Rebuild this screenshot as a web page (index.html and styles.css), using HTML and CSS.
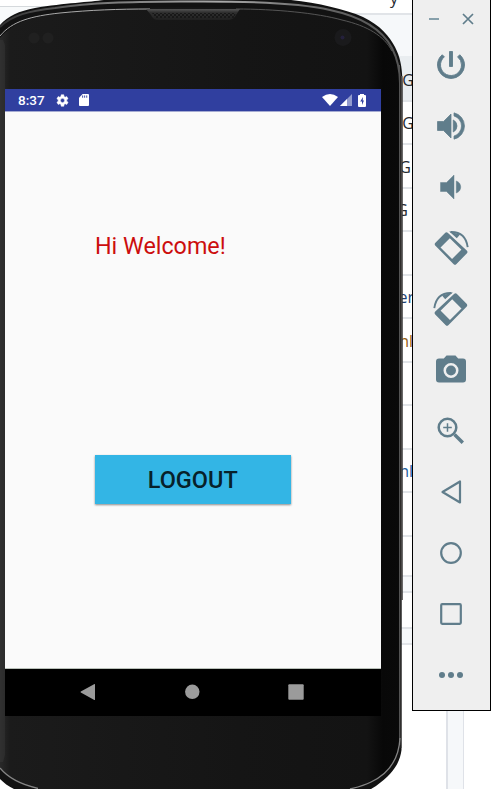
FILE: index.html
```html
<!DOCTYPE html>
<html lang="en">
<head>
<meta charset="utf-8">
<title>Emulator</title>
<link rel="stylesheet" href="styles.css">
</head>
<body>
<main class="desktop">
  <div class="page-left"></div>
  <section class="listing">
    <div class="row head"><span>y</span></div>
    <div class="row soft"></div>
    <div class="row tint"><span class="g1">G</span></div>
    <div class="row"><span class="g1">G</span></div>
    <div class="row"><span class="g3">G</span></div>
    <div class="row"><span class="g4">G</span></div>
    <div class="row"></div>
    <div class="row"><span class="er">er</span></div>
    <div class="row"><span class="nl">nl</span></div>
    <div class="row"></div>
    <div class="row"></div>
    <div class="row"><span class="nl blue">nl</span></div>
    <div class="row"></div>
    <div class="row short"></div>
    <div class="row band"></div>
    <div class="row gap"></div>
    <div class="row band"></div>
  </section>
  <div class="page-gutter"></div>

  <section class="phone">
    <svg class="shell" viewBox="0 0 404 789" width="404" height="789">
      <defs>
        <linearGradient id="body" x1="0" x2="1" y1="0" y2="0"><stop offset="0" stop-color="#292929"/><stop offset=".025" stop-color="#1b1b1b"/><stop offset=".6" stop-color="#151515"/><stop offset=".92" stop-color="#131313"/><stop offset=".96" stop-color="#080808"/><stop offset="1" stop-color="#090909"/></linearGradient>
        <linearGradient id="rim" x1="0" x2="1" y1="0" y2="0"><stop offset="0" stop-color="#303030"/><stop offset=".25" stop-color="#777"/><stop offset=".55" stop-color="#aaa"/><stop offset=".8" stop-color="#666"/><stop offset="1" stop-color="#555"/></linearGradient>
        <linearGradient id="slot" x1="0" x2="0" y1="0" y2="1"><stop offset="0" stop-color="#555"/><stop offset=".3" stop-color="#303030"/><stop offset="1" stop-color="#202020"/></linearGradient>
        <pattern id="mesh" width="4" height="4" patternUnits="userSpaceOnUse"><path d="M0 0h2v2H0zM2 2h2v2H2z" fill="#181818"/></pattern>
      </defs>
      <path fill="#121212" d="M0 25C8 16 19 11 35 8C65 3 90 2 104 0H291C318 3 345 9 363 17C380 25 390 37 395 47C400 57 402 65 402.500 82V600H401.500V750C400 762 394 773 376 786L371 789H14C8 786 4 783 0 779Z"/>
      <path fill="url(#body)" d="M0 38C14 21 36 16 65 13C125 6 257 5 310 13C350 18 379 29 391 47C397 58 399 67 399 82V740C398 760 391 773 368 783L350 789H38C18 785 7 778 0 767Z"/>
      <path fill="none" stroke="url(#rim)" stroke-width="2" d="M0 27C12 15 29 11 55 8C95 2 135 2 190 1.500C265 1 304 4 330 10C363 17 383 31 392 48C398 60 400 69 400 83"/>
      <path fill="none" stroke="#aaa" stroke-width="1" d="M0 36C12 21 32 16 60 13C90 10 118 9 150 9"/>
      <path fill="none" stroke="#555" stroke-width="1" d="M236 9C275 9 317 13 342 20C368 26 384 36 392 51"/>
      <path fill="none" stroke="#4b4948" stroke-width="2" d="M401.500 76V600"/>
      <path fill="none" stroke="#2e2c2b" stroke-width="1" d="M400.500 76V745"/>
      <path fill="none" stroke="#535353" stroke-width="1" d="M399.500 65V740"/>
      <path fill="none" stroke="#333" stroke-width="1" d="M401 600V748"/>
      <path fill="none" stroke="#858585" stroke-width="1.300" d="M400 738C399 758 390 773 371 782C363 786 358 787 350 789M0 768C8 778 19 784 38 788.500"/>
      <path fill="#3f3f3f" d="M0 40H3L5 45V755L3 762H0Z" opacity=".35"/>
      <path fill="url(#slot)" d="M146 9H240L236 15Q234 20 227 20H158Q153 20 151 15Z"/>
      <path fill="url(#mesh)" d="M152 13H236L234 18H155Z"/>
      <circle cx="34" cy="38" r="5.500" fill="#202020"/><circle cx="48" cy="38" r="5.500" fill="#202020"/>
      <circle cx="343" cy="37.500" r="8.500" fill="#1a1a1c"/><circle cx="342.500" cy="37.500" r="2" fill="#24203c"/>
    </svg>
    <div class="screen">
      <header class="status">
        <span class="clock">8:37</span>
        <svg class="gear" viewBox="3 2 20 20"><path d="M19.400 13a7 7 0 0 0 0-2l2.100-1.600-2-3.500-2.500 1a7 7 0 0 0-1.700-1L15 3.200h-4l-.4 2.700a7 7 0 0 0-1.700 1l-2.500-1-2 3.500L6.500 11a7 7 0 0 0 0 2l-2.100 1.600 2 3.500 2.500-1a7 7 0 0 0 1.700 1l.4 2.700h4l.4-2.700a7 7 0 0 0 1.700-1l2.500 1 2-3.500zM13 15.300a3.300 3.300 0 1 1 0-6.600 3.300 3.300 0 0 1 0 6.600z" fill="#fff" stroke="#fff" stroke-width=".8" fill-rule="evenodd"/></svg>
        <svg class="sd" viewBox="0 0 11 13"><path d="M4 0h6q1 0 1 1v11q0 1-1 1H1q-1 0-1-1V4z" fill="#fff"/><path d="M4 1.500v2.500M6.200 1.500v2.500M8.500 1.500v2.500" stroke="#303f9f"/></svg>
        <span class="fill"></span>
        <svg class="wifi" viewBox="0 0 16 12"><path d="M0 3Q8-3 16 3L8 12z" fill="#fff"/></svg>
        <svg class="signal" viewBox="0 0 12 12"><path d="M0 12L12 0v12z" fill="#929bce"/><path d="M0 12L7 5v7z" fill="#fff"/></svg>
        <svg class="battery" viewBox="0 0 8 13"><path d="M2 1V0h4v1h1q1 0 1 1v10q0 1-1 1H1q-1 0-1-1V2q0-1 1-1z" fill="#fff"/><path d="M5 3L2.200 7.500H4V11l2-4.500H4.700z" fill="#303f9f"/></svg>
      </header>
      <div class="content">
        <p class="welcome">Hi Welcome!</p>
        <button class="logout">LOGOUT</button>
      </div>
      <nav class="navbar">
        <svg viewBox="0 0 16 18"><path d="M14.500 1Q15 .7 15 1.500v15q0 .8-.7.500L.8 9.500Q.2 9 .8 8.500z" fill="#9b9b9b"/></svg>
        <svg viewBox="0 0 16 18"><circle cx="8.300" cy="8.800" r="7.200" fill="#9b9b9b"/></svg>
        <svg viewBox="0 0 16 18"><rect x=".3" y="1.300" width="15.400" height="15.400" rx="1" fill="#9b9b9b"/></svg>
      </nav>
    </div>
  </section>

  <aside class="toolbar">
    <div class="window-buttons">
      <svg viewBox="0 0 12 12"><path d="M1 6h10" stroke="#7b97a3" stroke-width="1.800"/></svg>
      <svg viewBox="0 0 12 12"><path d="M1 1l10 10M11 1L1 11" stroke="#607d8b" stroke-width="1.700"/></svg>
    </div>
    <div class="tool"><svg viewBox="0 0 24 24"><path d="M13 3h-2v10h2zm4.830 2.170l-1.420 1.420A6.920 6.920 0 0 1 19 12a7 7 0 1 1-11.420-5.420L6.170 5.170A8.930 8.930 0 0 0 3 12a9 9 0 0 0 18 0c0-2.740-1.230-5.180-3.170-6.830z" stroke="currentColor" stroke-width=".6"/></svg></div>
    <div class="tool"><svg viewBox="0 0 24 24"><path d="M3 9v6h4l5 5V4L7 9zm10.500-1.030v8.050A4.500 4.500 0 0 0 16 12a4.500 4.500 0 0 0-2.500-4.030zM14 3.230v2.060a7 7 0 0 1 0 13.420v2.060a9 9 0 0 0 0-17.540z" stroke="currentColor" stroke-width=".5"/></svg></div>
    <div class="tool"><svg viewBox="0 0 24 24"><path d="M5 9v6h4l5 5V4L9 9zm10.500-1.030v8.050A4.500 4.500 0 0 0 18.500 12a4.500 4.500 0 0 0-3-4.030z" stroke="currentColor" stroke-width=".3"/></svg></div>
    <div class="tool"><svg viewBox="0 0 36 36"><g id="rotate"><path fill-rule="evenodd" d="M12.300 2.700Q13.500 1.700 14.700 2.700L34 20.700Q35 22 34 23.200L23.200 34.200Q22 35.300 20.700 34.200L2.200 15.500Q1.200 14.200 2.200 13zM15.800 7.200L6.500 16.500L20.300 30.200L29.800 21Z"/><path d="M2.200 13.500L13 2.700L17.800 7.300L7.300 17.800zM18.500 29.500L29 19L34 22L22.500 34.200z"/><path d="M17.500 2Q32.500 1.500 34.700 17.200" fill="none" stroke="currentColor" stroke-width="1.900"/><path d="M16 1.300L27 4.500L23.800 8.200z"/></g></svg></div>
    <div class="tool"><svg viewBox="0 0 36 36"><use href="#rotate" transform="translate(36 0) scale(-1 1)"/></svg></div>
    <div class="tool raised"><svg viewBox="0 0 24 24"><path fill-rule="evenodd" d="M9 3L7.200 5H4a2 2 0 0 0-2 2v12a2 2 0 0 0 2 2h16a2 2 0 0 0 2-2V7a2 2 0 0 0-2-2h-3.200L15 3zM12 8a5 5 0 1 1 0 10a5 5 0 0 1 0-10z"/><circle cx="12" cy="13" r="3.300"/></svg></div>
    <div class="tool"><svg viewBox="0 0 36 36" fill="none" stroke="#607d8b"><circle cx="14.500" cy="14.500" r="8.800" stroke-width="2.500"/><path d="M14.500 10.200v8.600M10.200 14.500h8.600" stroke-width="1.500"/><path d="M21.500 21.500l8.300 8.300" stroke-width="3.400"/></svg></div>
    <div class="tool"><svg viewBox="0 0 36 36"><path d="M27 7.500v21L9.500 18z" fill="none" stroke="#607d8b" stroke-width="2.200" stroke-linejoin="round"/></svg></div>
    <div class="tool"><svg viewBox="0 0 36 36"><circle cx="18" cy="18" r="9.800" fill="none" stroke="#607d8b" stroke-width="2.200"/></svg></div>
    <div class="tool"><svg viewBox="0 0 36 36"><rect x="8.200" y="8.200" width="19.600" height="19.600" rx="1" fill="none" stroke="#607d8b" stroke-width="2.200"/></svg></div>
    <div class="tool"><svg viewBox="0 0 36 36"><circle cx="9" cy="18" r="3"/><circle cx="18" cy="18" r="3"/><circle cx="27" cy="18" r="3"/></svg></div>
  </aside>
</main>
</body>
</html>
```
FILE: styles.css
```css
* { box-sizing: border-box; }
body { margin: 0; font-family: Roboto, "Liberation Sans", sans-serif; }
svg { display: block; flex: none; }

.desktop { position: relative; width: 491px; height: 789px; overflow: hidden; background: #fff; }

/* Web page behind the emulator */
.page-left { position: absolute; left: 0; top: 6px; width: 88px; height: 60px; border-top: 1px solid #d5d9dc; background: #f8fafb; }
.listing { position: absolute; left: 88px; top: 0; width: 325px; font: 16px/20px "Open Sans", "Noto Sans", sans-serif; color: #24292e; }
.row { display: flex; align-items: center; justify-content: flex-end; height: 43.500px; padding-top: 2px; overflow: hidden; border-bottom: 2px solid #e1e4e8; }
.row.head { height: 15px; padding-right: 15px; align-items: flex-end; }
.row.head span { margin-bottom: 5px; }
.row.soft { height: 43px; background: #f6f8fa; border-bottom-color: #e9edf0; }
.row.tint { background: #e9edf0; }
.row.short { height: 40px; }
.row.band { height: 16px; background: #f6f8fa; }
.row.gap { height: 36px; }
.g1 { margin-right: -1px; }
.g3 { margin-right: 2px; }
.g4 { margin-right: 5px; }
.er { margin-right: -1px; color: #1c3f73; }
.nl { color: #94600f; }
.nl.blue { color: #1c5d9c; }
.page-gutter { position: absolute; left: 446px; top: 700px; width: 18px; height: 89px; background: #f6f8fa; border-left: 2px solid #dfe2e8; border-right: 1px solid #dfe2e8; }

/* Device */
.phone { position: absolute; left: 0; top: 0; width: 404px; height: 789px; padding: 89px 0 0 5px; }
.shell { position: absolute; left: 0; top: 0; }
.screen { position: relative; display: flex; flex-direction: column; width: 376px; height: 627px; background: #fafafa; }
.status { display: flex; align-items: center; height: 23px; padding: 0 15px 0 13px; background: #303f9f; border-bottom: 1px solid #a5abd2; color: #fff; }
.clock { width: 38px; font-size: 13.500px; font-weight: 500; line-height: 22px; }
.gear { width: 13px; height: 13px; margin-right: 10px; }
.sd { width: 10px; height: 12px; }
.fill { flex: 1; }
.wifi { width: 16px; height: 12px; margin-right: 2px; }
.signal { width: 12px; height: 12px; margin-right: 6px; }
.battery { width: 8px; height: 13px; }
.content { display: flex; flex: 1; flex-direction: column; align-items: flex-start; padding: 119px 90px 0; border-bottom: 1px solid #b9c0b9; }
.welcome { margin: 0; height: 30px; font-size: 23.300px; line-height: 30px; color: #cc0d0d; white-space: nowrap; }
.logout { width: 195.500px; height: 49px; margin-top: 194px; padding: 2px 0 0; border: 0; background: #33b5e5; box-shadow: 0 1px 2px rgba(0, 0, 0, .45); font: 500 23.500px/47px Roboto, sans-serif; color: #07212a; }
.navbar { display: flex; align-items: center; justify-content: space-between; height: 47px; padding: 0 77px 2px 75px; background: #000; }
.navbar svg { width: 16px; height: 18px; }

/* Emulator controls */
.toolbar { position: absolute; left: 412px; top: 0; width: 79px; height: 711px; background: #efefef; border: solid #000; border-width: 0 1px 1px; color: #607d8b; }
.window-buttons { display: flex; align-items: center; justify-content: space-between; height: 34.500px; padding: 4px 16px 0 15px; }
.window-buttons svg { width: 12px; height: 12px; }
.tool { display: flex; align-items: center; justify-content: center; height: 61px; padding-right: 2px; }
.tool.raised { padding-bottom: 2px; }
.tool svg { width: 36px; height: 36px; }
.tool path, .tool circle { fill: currentColor; }
.tool [fill="none"] path, .tool [fill="none"] circle, .tool path[fill="none"], .tool circle[fill="none"], .tool svg[fill="none"] circle { fill: none; }
```
